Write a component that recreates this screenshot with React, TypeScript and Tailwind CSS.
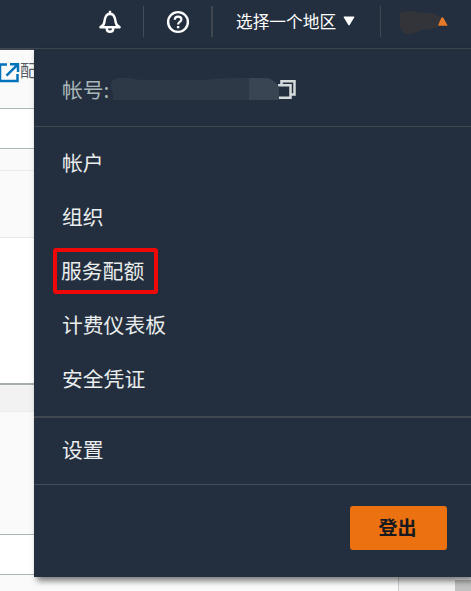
import React from "react";

const items = ["帐户", "组织", "服务配额", "计费仪表板", "安全凭证"];

function BellIcon() {
  return (
    <svg width="24" height="24" viewBox="0 0 24 24" fill="none" stroke="#fff" strokeWidth="2.4" strokeLinejoin="round">
      <path d="M12 2v2" strokeLinecap="square" />
      <path d="M2.400 17.200c2.200-1 3.600-2.400 4-5.200C6.900 7 8.500 3.700 12 3.700S17.100 7 17.600 12c.4 2.800 1.800 4.200 4 5.200Z" />
      <path d="M8.800 17.500v1.200c0 1.800 1.400 3 3.200 3s3.200-1.200 3.200-3v-1.200" />
    </svg>
  );
}

function HelpIcon() {
  return (
    <svg width="24" height="24" viewBox="0 0 24 24" fill="none" stroke="#fff">
      <circle cx="12" cy="12" r="9.900" strokeWidth="2.400" />
      <path d="M8.800 9.800c0-2 1.300-3.200 3.300-3.200s3.300 1.100 3.300 2.900c0 2.400-3.300 2.400-3.300 4.900" strokeWidth="2.200" />
      <path d="M12.100 16v2.300" strokeWidth="2.400" />
    </svg>
  );
}

function Header() {
  return (
    <header className="flex h-[49px] shrink-0 items-start border-b border-[#414750] bg-[#232f3e] text-white">
      <div className="flex h-11 w-[143px] items-center justify-end pr-[21px]"><BellIcon /></div>
      <div className="mt-1.5 h-[31px] w-px bg-[#414d5c]" />
      <div className="flex h-11 w-[67px] items-center pl-[22px]"><HelpIcon /></div>
      <div className="mt-1.5 h-[31px] w-[2px] bg-[#414750]" />
      <div className="flex h-[41px] w-[167px] items-center pl-[23px]">
        <span className="text-[16.700px] leading-6 whitespace-nowrap">选择一个地区</span>
        <svg className="ml-[7px]" width="12" height="10" viewBox="0 0 12 10"><path d="M1.500 .5h9q1.300 0 .7 1.100L6.800 8.800q-.8 1.200-1.600 0L.8 1.600Q.2.500 1.500.5Z" fill="#fff" /></svg>
      </div>
      <div className="mt-1.5 h-[31px] w-px bg-[#414750]" />
      <svg className="ml-[18px] mt-[10px]" width="52" height="26" viewBox="0 0 52 26">
        <path d="M1 3Q2 1 13 1Q20 3 34 3l9 5-4 9Q32 20 22 20Q15 24 9 24Q3 24 1 17Z" fill="#333439" />
        <path d="M42.500 7.500q1.200-.8 2 .5l4.200 7.800h-9.600l1.400-4Z" fill="#e47a27" />
      </svg>
    </header>
  );
}

function PageEdge() {
  return (
    <div className="flex w-[34px] shrink-0 flex-col overflow-hidden bg-[#fafafa]">
      <div className="flex h-[60px] shrink-0 items-start border-t border-b border-t-[#414750] border-b-[#aab7b8]">
        <svg className="mt-[13px] shrink-0" width="20" height="20" viewBox="0 0 20 20" fill="none" stroke="#0073bb" strokeWidth="2.500">
          <path d="M7 1.600H0v16.500h17.500V11M10 1.300h8v7.700M17.600 1.600 6.500 12.600" />
        </svg>
        <span className="mt-[8px] text-[16.500px] leading-6 text-[#545b64]">配</span>
      </div>
      <div className="h-10 shrink-0 border-b border-[#aab7b8] bg-white" />
      <div className="h-[22px] shrink-0 border-b border-[#eaeded]" />
      <div className="h-[67px] shrink-0 border-b border-[#e5e8e8]" />
      <div className="h-[147px] shrink-0 border-b-2 border-[#a5adaf] bg-white" />
      <div className="h-[27px] shrink-0 border-b border-[#eaeded] bg-[#f2f2f2]" />
      <div className="h-[123px] shrink-0 border-b border-[#aab7b8]" />
      <div className="h-10 shrink-0 border-b border-[#aab7b8] bg-white" />
    </div>
  );
}

function AccountRow() {
  return (
    <div className="flex h-[78px] shrink-0 items-start border-b border-[#414750] pl-[28px] text-[#aab7b8]">
      <span className="mt-[24px] w-[48px] text-[20.800px] leading-8 whitespace-nowrap">帐号:</span>
      <svg className="mt-[27px]" width="190" height="26" viewBox="0 0 190 26">
        <g fill="none" stroke="#d5dbdb" strokeWidth="2.500">
          <path d="M171.500 8V5.200h13v13.300h-3.500" />
          <path d="M168 9.300h12.500v12.500H167" />
        </g>
        <path d="M8 2h10q8 2 18 2h58q15-2 31-2h35v22H3q1-6-1-9Q-2 4 8 2Z" fill="#2e3947" />
        <path d="M139 2h14q9 0 14 6l2 3v13h-30Z" fill="#394552" />
      </svg>
    </div>
  );
}

function AccountMenu() {
  return (
    <nav className="relative z-10 flex h-[528px] flex-1 flex-col bg-[#232f3e] shadow-[3px_4px_6px_rgba(0,0,0,0.5)]">
      <AccountRow />
      <ul className="flex h-[291px] shrink-0 flex-col border-b-2 border-[#414750] pt-[9px] pl-[28px] text-[20.800px] text-[#eaeded]">
        {items.map((item) => (
          <li key={item} className="flex h-[54px] shrink-0 items-center">
            {item === "服务配额" ? (
              <span className="-ml-[9px] flex h-[46px] w-[105px] items-center rounded-[3px] border-4 border-[#f00808] pl-[4px] whitespace-nowrap">{item}</span>
            ) : item}
          </li>
        ))}
      </ul>
      <div className="flex h-[67px] shrink-0 items-center border-b border-[#414d5c] pb-[2px] pl-[28px] text-[20.800px] text-[#eaeded]">设置</div>
      <div className="flex justify-end pt-[21px] pr-6">
        <button className="h-11 w-[97px] rounded-[3px] bg-[#ec7211] pr-[2px] pb-[2px] text-[19px] font-bold text-[#16191f]">登出</button>
      </div>
    </nav>
  );
}

export default function App() {
  return (
    <div className="flex h-[591px] w-[471px] flex-col overflow-hidden bg-[#fafafa] font-['Noto_Sans_CJK_SC',sans-serif]">
      <Header />
      <main className="flex h-[528px] shrink-0">
        <PageEdge />
        <AccountMenu />
      </main>
      <footer className="flex h-3.5 items-end">
        <div className="h-full w-[399px] border-r border-[#c5cbcf]" />
        <div className="h-full flex-1 bg-[#f1f1f1]" />
        <div className="h-[11px] w-4 bg-[#c1c1c1]" />
      </footer>
    </div>
  );
}
